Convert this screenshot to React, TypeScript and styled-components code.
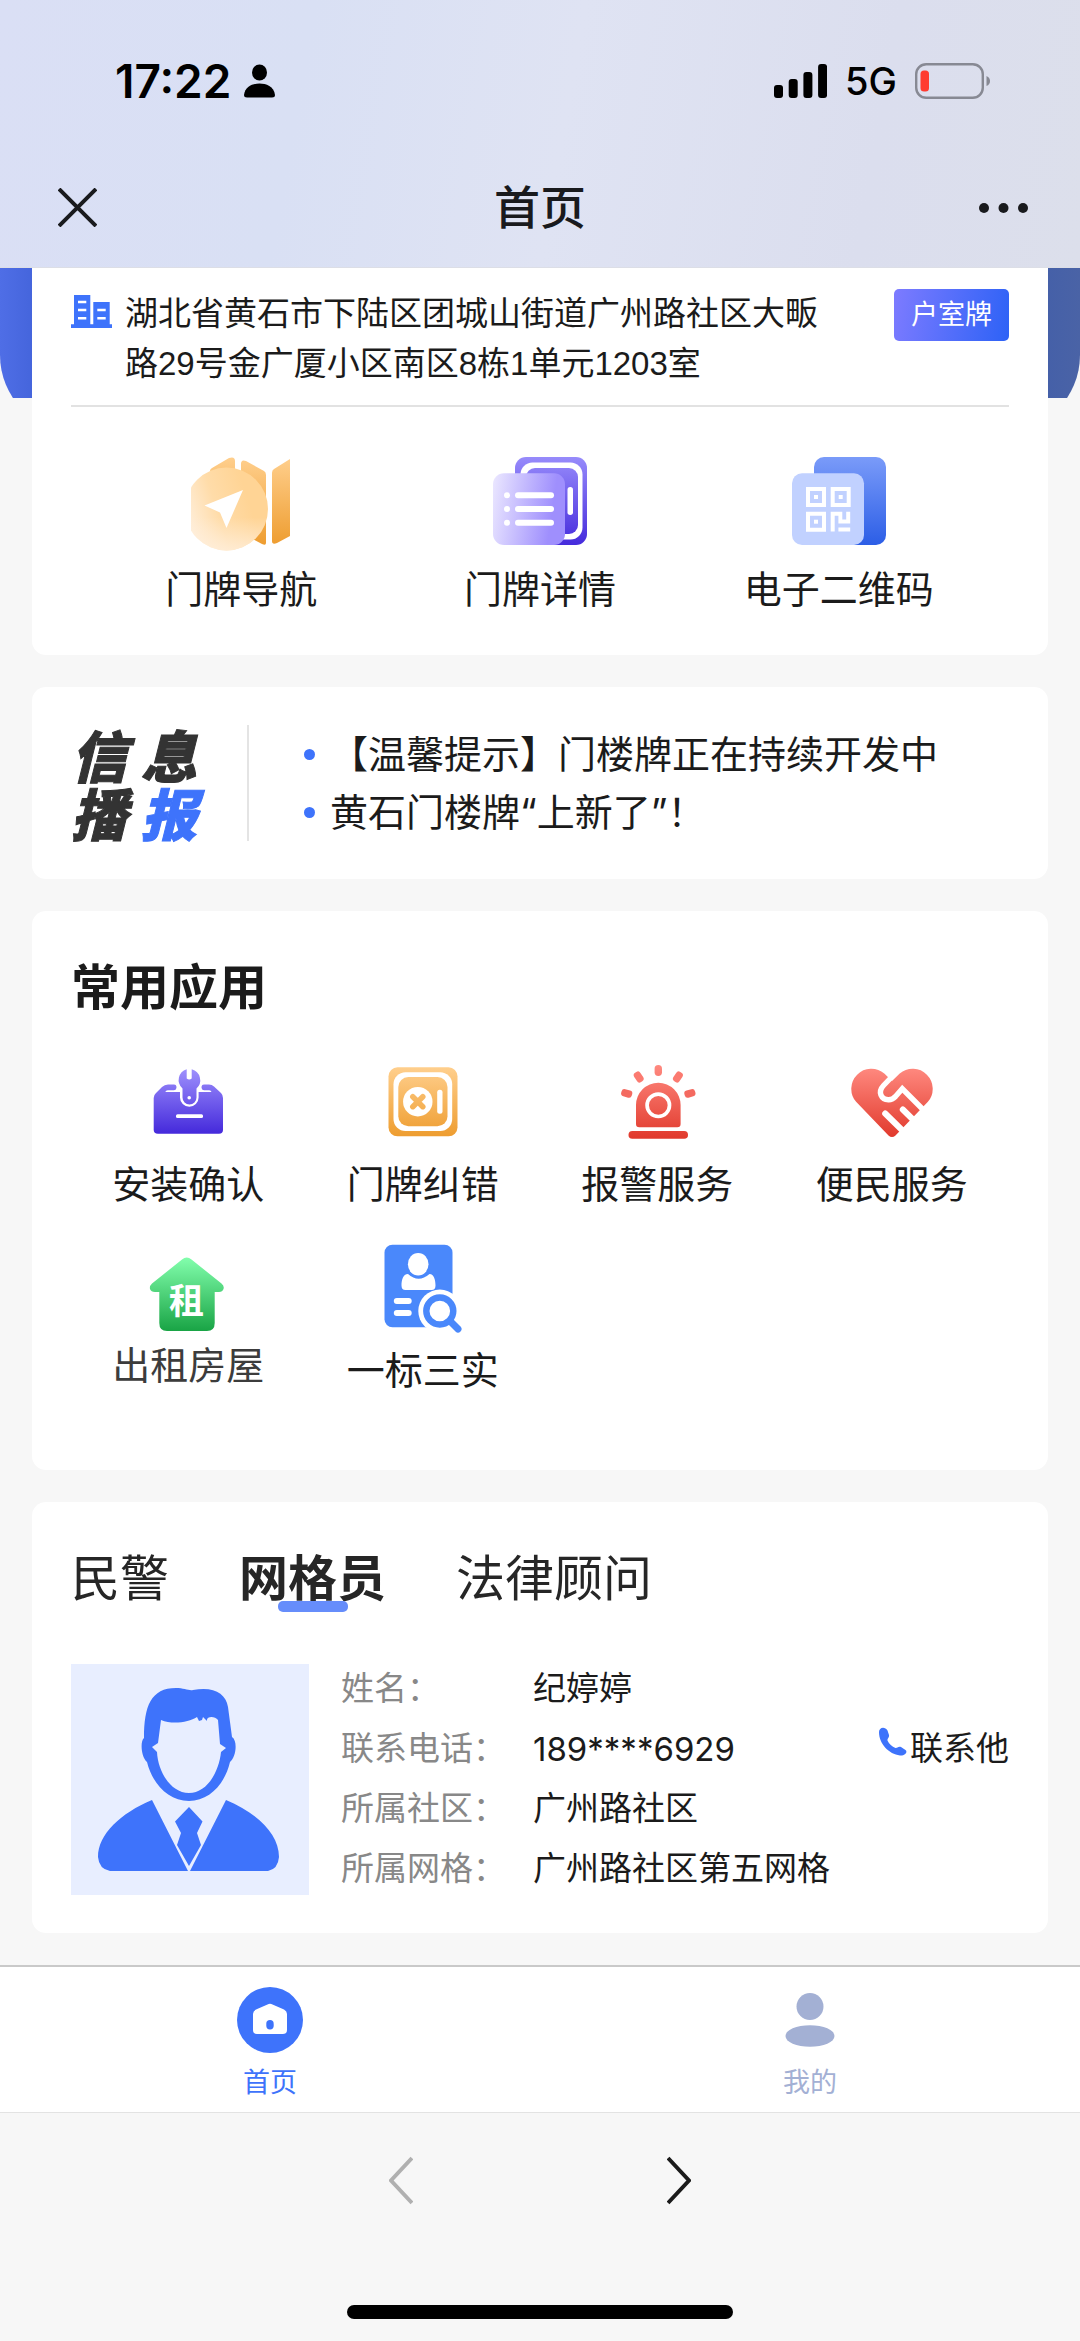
import React, { useState } from "react";
import styled, { createGlobalStyle } from "styled-components";

const sans = `"Liberation Sans", "Noto Sans CJK SC", sans-serif`;
const system = `Inter, "Noto Sans CJK SC", sans-serif`;

const GlobalStyle = createGlobalStyle`
  *, *::before, *::after { box-sizing: border-box; }
  body { margin: 0; background: #f7f7f7; color: #1b1b1b; font-family: ${sans}; }
  h1, h2, p, ul, dl, dd { margin: 0; padding: 0; }
  button { margin: 0; padding: 0; border: 0; background: none; color: inherit; font: inherit; cursor: pointer; }
  a { color: inherit; text-decoration: none; }
  svg { display: block; flex: none; }
`;

const Page = styled.div`
  display: flex;
  flex-direction: column;
  min-height: 100vh;
`;

const Header = styled.header`
  padding-top: 54px;
  border-bottom: 1px solid #dcdee6;
  background: linear-gradient(100deg, #dadff5 0%, #d9e0f4 28%, #dfe3f3 52%, #dbdeee 80%, #dcdfeb 100%);
`;

const StatusBar = styled.div`
  display: flex;
  align-items: center;
  justify-content: space-between;
  height: 54px;
  padding: 0 90px 0 115px;
  color: #000;
  font-family: ${system};
`;

const StatusGroup = styled.div<{ $gap: number }>`
  display: flex;
  align-items: center;
  gap: ${(p) => p.$gap}px;
`;

const Clock = styled.time`
  font-size: 46px;
  font-weight: 600;
  line-height: 54px;
`;

const Network = styled.span`
  font-size: 38px;
  font-weight: 500;
  line-height: 54px;
`;

const TitleBar = styled.div`
  display: grid;
  grid-template-columns: 1fr auto 1fr;
  align-items: center;
  height: 119px;
  margin-top: 40px;
  padding: 0 52px;
`;

const BarButton = styled.button<{ $end?: boolean }>`
  justify-self: ${(p) => (p.$end ? "end" : "start")};
  padding-left: 6px;
`;

const PageTitle = styled.h1`
  color: #191a1d;
  font-size: 46px;
  font-weight: 500;
  line-height: 60px;
`;

const Content = styled.main`
  position: relative;
  flex: 1;
  display: flex;
  flex-direction: column;
  gap: 32px;
  padding: 0 32px 32px;
`;

const Backdrop = styled.div`
  position: absolute;
  inset: 0 0 auto;
  height: 130px;
  overflow: hidden;

  &::before {
    content: "";
    display: block;
    height: 165px;
    border-radius: 0 0 78px 78px;
    background: linear-gradient(90deg, #4f6ee6 0%, #4565dc 3%, #4560a8 97%, #4a63a6 100%);
  }
`;

const Card = styled.section<{ $pad: string; $flush?: boolean }>`
  position: relative;
  padding: ${(p) => p.$pad};
  border-radius: ${(p) => (p.$flush ? "0 0 14px 14px" : "14px")};
  background: #fff;
`;

const AddressRow = styled.div`
  display: flex;
  align-items: flex-start;
  padding-bottom: 16px;
  border-bottom: 2px solid #e2e2e2;

  > svg { margin: 6px 13px 0 0; }
`;

const Address = styled.p`
  flex: 1;
  max-width: 710px;
  font-size: 33px;
  line-height: 50px;
`;

const DoorTag = styled.button`
  width: 115px;
  height: 52px;
  margin-left: auto;
  border-radius: 5px;
  background: linear-gradient(100deg, #7d7bff 0%, #2d62f6 100%);
  color: #fff;
  font-size: 27px;
  line-height: 52px;
`;

const Shortcuts = styled.div`
  display: grid;
  grid-template-columns: repeat(3, 1fr);
  padding: 50px 21px 0;
`;

const Grid = styled.div`
  display: grid;
  grid-template-columns: repeat(4, 1fr);
  row-gap: 34px;
  margin-top: 44px;
`;

const Tile = styled.button<{ $icon: number; $gap: number; $top?: number; $soft?: boolean }>`
  display: flex;
  flex-direction: column;
  align-items: center;
  justify-content: flex-start;
  gap: ${(p) => p.$gap}px;
  padding-top: ${(p) => p.$top ?? 0}px;
  color: ${(p) => (p.$soft ? "#3c3c3c" : "#1b1b1b")};
  font-size: 38px;
  line-height: 50px;

  > svg { height: ${(p) => p.$icon}px; }
`;

const NewsCard = styled(Card)`
  display: flex;
  align-items: center;
`;

const NewsLogo = styled.h2`
  display: grid;
  grid-template-columns: 70px 67px;
  grid-auto-rows: 58px;
  color: #333;
  font-family: "Noto Sans CJK SC", sans-serif;
  font-size: 56px;
  font-style: italic;
  font-weight: 900;
  line-height: 58px;
`;

const LogoGlyph = styled.span<{ $accent?: boolean }>`
  color: ${(p) => (p.$accent ? "#3e73fb" : "inherit")};
  -webkit-text-stroke: 1px currentColor;
`;

const NewsList = styled.ul`
  flex: 1;
  margin-left: 39px;
  padding-left: 55px;
  border-left: 2px solid #e4e4e4;
  font-family: ${system};
  list-style: none;
`;

const NewsItem = styled.li`
  display: flex;
  align-items: center;
  gap: 15px;
  font-size: 38px;
  line-height: 58px;

  &::before {
    content: "";
    width: 11px;
    height: 11px;
    border-radius: 50%;
    background: #3e73fb;
  }
`;

const SectionTitle = styled.h2`
  font-size: 49px;
  font-weight: 700;
  line-height: 60px;
`;

const Tabs = styled.div`
  display: flex;
  gap: 70px;
`;

const Tab = styled.button<{ $active: boolean }>`
  position: relative;
  color: #262626;
  font-size: 49px;
  font-weight: ${(p) => (p.$active ? 700 : 400)};
  line-height: 60px;

  &::after {
    content: "";
    display: ${(p) => (p.$active ? "block" : "none")};
    position: absolute;
    left: 50%;
    bottom: -3px;
    width: 70px;
    height: 11px;
    margin-left: -35px;
    border-radius: 5px;
    background: #668dfb;
  }
`;

const Person = styled.div`
  display: flex;
  align-items: center;
  gap: 32px;
  margin-top: 50px;
`;

const Details = styled.dl`
  flex: 1;
  display: grid;
  grid-template-columns: 192px 1fr;
  font-size: 33px;
  line-height: 60px;

  dt { color: #888; }
  dd { display: flex; justify-content: space-between; }
`;

const PhoneNumber = styled.span`
  font-family: ${system};
`;

const CallLink = styled.a`
  display: flex;
  gap: 3px;

  > svg { margin-top: 8px; }
`;

const TabBar = styled.nav`
  display: grid;
  grid-template-columns: 1fr 1fr;
  padding: 20px 0 11px;
  border-top: 2px solid #c9c9c9;
  background: #fff;
`;

const TabBarLink = styled.a<{ $active?: boolean }>`
  display: flex;
  flex-direction: column;
  align-items: center;
  gap: 12px;
  color: ${(p) => (p.$active ? "#3e73fb" : "#a3b0d4")};
  font-size: 27px;
  line-height: 36px;
`;

const BrowserBar = styled.footer`
  display: flex;
  flex-direction: column;
  align-items: center;
  gap: 100px;
  padding: 43px 0 22px;
  border-top: 1px solid #e3e3e3;
  background: #f7f7f7;
`;

const History = styled.div`
  display: flex;
  gap: 254px;
`;

const HomeIndicator = styled.div`
  width: 386px;
  height: 14px;
  border-radius: 7px;
  background: #000;
`;

function Fade({ id, from, to, y1 = 0, y2, x2 = 0 }: { id: string; from: string; to: string; y1?: number; y2: number; x2?: number }) {
  return (
    <defs>
      <linearGradient id={id} gradientUnits="userSpaceOnUse" x1={0} y1={y1} x2={x2} y2={y2}>
        <stop offset="0" stopColor={from} />
        <stop offset="1" stopColor={to} />
      </linearGradient>
    </defs>
  );
}

const CompassIcon = () => (
  <svg width="100" height="94" viewBox="0 0 100 94">
    <Fade id="map" from="#ffcf8d" to="#ee9d30" y2={88} />
    <defs>
      <linearGradient id="disc" x1="0" y1="0.6" x2="0.75" y2="0.35">
        <stop offset="0" stopColor="#ffefdc" />
        <stop offset="0.5" stopColor="#ffdca9" />
        <stop offset="1" stopColor="#ffd495" />
      </linearGradient>
      <linearGradient id="discBase" x1="0" y1="0" x2="0" y2="1">
        <stop offset="0.6" stopColor="#ffefdc" stopOpacity="0" />
        <stop offset="1" stopColor="#ffefdc" stopOpacity="0.8" />
      </linearGradient>
    </defs>
    <path fill="url(#map)" d="M19 24V14Q19 12 21 11L38 1Q44-1 44 4V24ZM50 30V7Q50 2 55 4L73 14Q75 15 75 18V86Q75 89 71 87L50 76ZM81 16Q81 13 83 12L99 2V79L86 86Q81 88 81 84Z" />
    <circle cx="35.5" cy="52" r="41.5" fill="url(#disc)" />
    <circle cx="35.5" cy="52" r="41.5" fill="url(#discBase)" />
    <path fill="#fff" d="M13.5 48.5 52 33 35.5 71 29 55.5Z" />
  </svg>
);

const DetailIcon = () => (
  <svg width="94" height="94" viewBox="0 0 94 94">
    <Fade id="door" from="#978bfb" to="#452bdc" y2={88} />
    <Fade id="sheet" from="#eeebff" to="#9f8ffd" x2={66} y2={10} />
    <rect x="22" width="72" height="88" rx="11" fill="url(#door)" />
    <rect x="27.5" y="5.5" width="62" height="77" rx="12" fill="#fff" />
    <rect x="33" y="11" width="52" height="66" rx="9" fill="url(#door)" />
    <rect x="74.5" y="30" width="5.5" height="28" rx="2.7" fill="#fff" />
    <rect y="16.3" width="72" height="71.7" rx="11" fill="url(#sheet)" />
    {[38.3, 52, 65.7].map((y) => (
      <g key={y} fill="#fff">
        <circle cx="14" cy={y} r="3" />
        <rect x="22" y={y - 3} width="39" height="6" rx="3" />
      </g>
    ))}
  </svg>
);

const QrIcon = () => (
  <svg width="94" height="94" viewBox="0 0 94 94">
    <Fade id="blueCard" from="#7a9bf9" to="#2c5ee6" y2={88} />
    <rect x="22" width="72" height="88" rx="10" fill="url(#blueCard)" />
    <rect y="16.3" width="72" height="71.7" rx="10" fill="#c1d1ff" />
    {[[14, 30], [38.7, 30], [14, 54.7]].map(([x, y]) => (
      <g key={`${x}-${y}`} fill="#fff">
        <path fillRule="evenodd" d={`M${x} ${y}h20v20h-20ZM${x + 4} ${y + 4}v12h12v-12Z`} />
        <rect x={x + 8} y={y + 8} width="4" height="4" />
      </g>
    ))}
    <path fill="#fff" d="M38.7 54.7H50.3V62.5H54.2V54.7H58.2V66.5H46.4V58.7H42.7V74.6H38.7ZM46.4 70.5H58.2V74.6H46.4Z" />
  </svg>
);

const BuildingIcon = () => (
  <svg width="41" height="33" viewBox="0 0 41 33">
    <path fill="#3e73fb" d="M3 0H19.3V29.3H22.3V7H38.7V29.3H41V33H0V29.3H3Z" />
    <path stroke="#fff" strokeWidth="2.6" d="M7 7H15.3M7 15H15.3M7 23.3H15.3M26.3 15H34.7M26.3 23.3H34.7" />
  </svg>
);

const ToolboxIcon = () => (
  <svg width="80" height="80" viewBox="0 0 80 80">
    <Fade id="tool" from="#9c8efc" to="#4429db" y1={8} y2={72} />
    <path fill="url(#tool)" d="M5.7 36Q5.7 33 8 31L14 25Q16.5 22.5 20 22.5H61Q64 22.5 66 24.5L73 31Q75 33 75 36V68Q75 71.7 71 71.7H10Q5.7 71.7 5.7 68Z" />
    <path fill="#fff" d="M17.5 30V29.5Q18.5 28.3 20 28.3H26Q28.5 28 28.5 25.5Q28.5 22.5 26 22H56Q53.5 22.5 53.5 25.5Q53.5 28 56 28.3H61Q62.5 28.3 63.3 29.5V30H50.6V35.5A9.3 9.3 0 0 1 32 35.5V30Z" />
    <path fill="url(#tool)" d="M38.7 7.2V16.5Q41.2 18.5 43.7 16.5V7.2A11.3 11.3 0 0 1 48.5 26.5V35.5A7 7 0 0 1 34.5 35.5V26.5A11.3 11.3 0 0 1 38.7 7.2Z" />
    <circle cx="41.2" cy="35.7" r="1.8" fill="#fff" />
    <rect x="28" y="52.3" width="27" height="3.7" rx="1.5" fill="#fff" />
  </svg>
);

const DoorErrorIcon = () => (
  <svg width="80" height="80" viewBox="0 0 80 80">
    <Fade id="amber" from="#ffcf8d" to="#ee9d30" y1={5} y2={74} />
    <rect x="5.5" y="5.3" width="69" height="69" rx="9" fill="url(#amber)" />
    <rect x="10.5" y="10.3" width="58.7" height="58.7" rx="12" fill="#fff" />
    <rect x="15.3" y="15" width="49.2" height="49.3" rx="10" fill="url(#amber)" />
    <circle cx="34.8" cy="39.7" r="14.7" fill="#fff" />
    <path stroke="url(#amber)" strokeWidth="5.5" strokeLinecap="round" d="M29.8 34.7 39.8 44.7M39.8 34.7 29.8 44.7" />
    <rect x="54.2" y="27.7" width="5.3" height="24" rx="2.5" fill="#fff" />
  </svg>
);

const SirenIcon = () => (
  <svg width="80" height="80" viewBox="0 0 80 80">
    <Fade id="alarm" from="#ff8a80" to="#e13a2d" y1={3} y2={76} />
    <g fill="url(#alarm)">
      <path d="M19 43A22.3 22.3 0 0 1 63.6 43V62Q63.6 65.3 60.3 65.3H22.3Q19 65.3 19 62Z" />
      <rect x="11.5" y="69" width="59.5" height="7.7" rx="3.8" />
      <rect x="37.6" y="3" width="7.4" height="11" rx="3.7" />
    </g>
    <g fill="#fb7a70">
      <rect x="18" y="9.5" width="7.4" height="11" rx="3" transform="rotate(-33 21.7 15)" />
      <rect x="57.2" y="9.5" width="7.4" height="11" rx="3" transform="rotate(33 60.9 15)" />
    </g>
    <g fill="#f46a60">
      <rect x="6" y="25.9" width="7.4" height="11" rx="3" transform="rotate(-74 9.7 31.4)" />
      <rect x="69.2" y="25.9" width="7.4" height="11" rx="3" transform="rotate(74 72.9 31.4)" />
    </g>
    <circle cx="41.3" cy="43.3" r="11.2" fill="none" stroke="#fff" strokeWidth="3.7" />
  </svg>
);

const HeartHandIcon = () => (
  <svg width="86" height="80" viewBox="0 0 86 80">
    <Fade id="heart" from="#ff8a80" to="#e1392c" y1={5} y2={76} />
    <path fill="url(#heart)" d="M43 19 35.3 11.6A20 20 0 0 0 7.1 39.8L39.5 73.5Q43 76.5 46.5 73.5L78.9 39.8A20 20 0 0 0 50.7 11.6Z" />
    <g fill="none" stroke="#fff">
      <path strokeWidth="5.4" d="M46.5 11 34.5 23.5C28.5 30 32 37.5 39.5 37.8C43 38 45 36 46.5 34.5L53.3 26.8 77 50.5" />
      <path strokeWidth="6" strokeLinecap="round" d="M36.2 51.5 55 70M53.8 47.5 70 63.5" />
    </g>
  </svg>
);

const RentIcon = () => (
  <svg width="80" height="80" viewBox="0 0 80 80">
    <Fade id="rent" from="#83ffad" to="#19a445" y1={3} y2={77} />
    <path fill="url(#rent)" d="M34 5.5Q38.7 1.5 43.5 5.5L73.5 29.5Q76.5 32 75.5 35Q74.5 38 71 38H66.7V69Q66.7 77 59 77H19Q11.3 77 11.3 69V38H7Q3 38 2 35Q1.3 32 4 29.5Z" />
    <text x="38.5" y="60" textAnchor="middle" fill="#fff" fontFamily="Noto Sans CJK SC" fontSize="35" fontWeight="700">租</text>
  </svg>
);

const SearchCardIcon = () => (
  <svg width="80" height="90" viewBox="0 0 80 90">
    <rect x="1.5" y="0.7" width="68" height="82.6" rx="8" fill="#4a88fb" />
    <ellipse cx="35.2" cy="20.3" rx="10.3" ry="11.3" fill="#fff" />
    <path fill="#fff" d="M25 30Q35.5 39.5 46.5 30C51 30 52.5 36 52.5 41.5Q52.5 46 48.5 46H22.5Q18.5 46 18.5 41.5C18.5 36 20 30 25 30Z" />
    <rect x="10.8" y="54" width="17.9" height="6" rx="3" fill="#fff" />
    <rect x="10.8" y="66" width="17.9" height="6" rx="3" fill="#fff" />
    <circle cx="56.8" cy="67" r="21.5" fill="#fff" />
    <circle cx="56.8" cy="67" r="13.5" fill="#fff" stroke="#4a88fb" strokeWidth="6.4" />
    <path stroke="#4a88fb" strokeWidth="7" strokeLinecap="round" d="M67 77 75 85" />
  </svg>
);

const Avatar = () => (
  <svg width="238" height="231" viewBox="0 0 238 231" role="img" aria-label="网格员头像">
    <path fill="#e8eeff" d="M0 0H238V231H0Z" />
    <g fill="#3e73fb">
      <path fillRule="evenodd" d="M73 74C73 42 80 24 105 24C113 24 118 27 122 26C142 22 155 29 157 43L161 73C167 77 165 93 159 98C154 120 138 137 118 137C97 137 81 119 76 98C70 93 69 77 73 74ZM90 56C102 61 118 58 126 53L128 57 131 56 132 53 136 57C135 52 144 52 147 56L149 80 155 84 150 88C148 108 136 129 118 129C100 129 87 108 86 88L81 83 87 79Z" />
      <path d="M81 136 117 207H39Q28 205 27 193C27 170 50 149 81 136ZM155 136 119 207H197Q207 205 208 193C208 170 186 149 155 136ZM118 143 131.5 157.5 126 169 130 181 118 202 106 181 110 169 104 157.5Z" />
    </g>
  </svg>
);

const PhoneIcon = () => (
  <svg width="28" height="29" viewBox="0 0 28 29">
    <path fill="#3e73fb" d="M0 5C0 0 6-1 8.5 3.5L10 8C10.5 11 8 11.5 8.5 13.5C10 17 13 19.5 16.5 21C18 21.5 19 19 22 20L26.5 23C29 25 26 29 21 28.5C10 27 0 17 0 5Z" />
  </svg>
);

const people = ["民警", "网格员", "法律顾问"];

export default function App() {
  const [tab, setTab] = useState(1);

  return (
    <Page lang="zh-CN">
      <GlobalStyle />
      <Header>
        <StatusBar>
          <StatusGroup $gap={13}>
            <Clock>17:22</Clock>
            <svg width="31" height="34" viewBox="0 0 31 34">
              <ellipse cx="15.5" cy="8.5" rx="7.5" ry="8" />
              <path d="M0 31C1 22 9 19.5 15.5 19.5S30 22 31 31Q31 33.5 28 33.5H3Q0 33.5 0 31Z" />
            </svg>
          </StatusGroup>
          <StatusGroup $gap={18}>
            <svg width="53" height="34" viewBox="0 0 53 34">
              {[13, 19, 26, 34].map((h, i) => (
                <rect key={h} x={i * 14.7} y={34 - h} width="9" height={h} rx="3" />
              ))}
            </svg>
            <Network>5G</Network>
            <svg width="75" height="36" viewBox="0 0 75 36">
              <rect x="1.2" y="1.2" width="66.6" height="33.6" rx="10" fill="none" stroke="#878993" strokeWidth="2.4" />
              <rect x="5.5" y="7.5" width="8.5" height="21" rx="3.5" fill="#ff3b30" />
              <path fill="#878993" d="M71.5 13Q75 14.5 75 18T71.5 23Z" />
            </svg>
          </StatusGroup>
        </StatusBar>
        <TitleBar>
          <BarButton aria-label="关闭">
            <svg width="39" height="39" viewBox="0 0 39 39">
              <path stroke="#191a1d" strokeWidth="4" d="M1 1 38 38M38 1 1 38" />
            </svg>
          </BarButton>
          <PageTitle>首页</PageTitle>
          <BarButton $end aria-label="更多">
            <svg width="49" height="10" viewBox="0 0 49 10" fill="#191a1d">
              <circle cx="5" cy="5" r="5" />
              <circle cx="24.5" cy="5" r="5" />
              <circle cx="44" cy="5" r="5" />
            </svg>
          </BarButton>
        </TitleBar>
      </Header>

      <Content>
        <Backdrop />
        <Card $flush $pad="21px 39px 40px">
          <AddressRow>
            <BuildingIcon />
            <Address>湖北省黄石市下陆区团城山街道广州路社区大畈路29号金广厦小区南区8栋1单元1203室</Address>
            <DoorTag>户室牌</DoorTag>
          </AddressRow>
          <Shortcuts>
            <Tile $icon={94} $gap={14}><CompassIcon />门牌导航</Tile>
            <Tile $icon={94} $gap={14}><DetailIcon />门牌详情</Tile>
            <Tile $icon={94} $gap={14}><QrIcon />电子二维码</Tile>
          </Shortcuts>
        </Card>

        <NewsCard $pad="38px 39px">
          <NewsLogo>
            <LogoGlyph>信</LogoGlyph>
            <LogoGlyph>息</LogoGlyph>
            <LogoGlyph>播</LogoGlyph>
            <LogoGlyph $accent>报</LogoGlyph>
          </NewsLogo>
          <NewsList>
            <NewsItem>【温馨提示】门楼牌正在持续开发中</NewsItem>
            <NewsItem>黄石门楼牌“上新了”！</NewsItem>
          </NewsList>
        </NewsCard>

        <Card $pad="47px 39px 74px">
          <SectionTitle>常用应用</SectionTitle>
          <Grid>
            <Tile $icon={80} $gap={18}><ToolboxIcon />安装确认</Tile>
            <Tile $icon={80} $gap={18}><DoorErrorIcon />门牌纠错</Tile>
            <Tile $icon={80} $gap={18}><SirenIcon />报警服务</Tile>
            <Tile $icon={80} $gap={18}><HeartHandIcon />便民服务</Tile>
            <Tile $icon={80} $gap={7} $top={10} $soft><RentIcon />出租房屋</Tile>
            <Tile $icon={90} $gap={12}><SearchCardIcon />一标三实</Tile>
          </Grid>
        </Card>

        <Card $pad="47px 39px 34px">
          <Tabs role="tablist">
            {people.map((name, i) => (
              <Tab key={name} role="tab" aria-selected={tab === i} $active={tab === i} onClick={() => setTab(i)}>
                {name}
              </Tab>
            ))}
          </Tabs>
          <Person>
            <Avatar />
            <Details>
              <dt>姓名：</dt>
              <dd>纪婷婷</dd>
              <dt>联系电话：</dt>
              <dd>
                <PhoneNumber>189****6929</PhoneNumber>
                <CallLink href="#call"><PhoneIcon />联系他</CallLink>
              </dd>
              <dt>所属社区：</dt>
              <dd>广州路社区</dd>
              <dt>所属网格：</dt>
              <dd>广州路社区第五网格</dd>
            </Details>
          </Person>
        </Card>
      </Content>

      <TabBar>
        <TabBarLink href="#home" $active>
          <svg width="66" height="66" viewBox="0 0 66 66">
            <circle cx="33" cy="33" r="33" fill="#3e73fb" />
            <path fill="#fff" d="M30.5 17.5Q33 15.8 35.5 17.5L47 22.5Q50 24.2 50 27V43Q50 47 46 47H20Q16 47 16 43V27Q16 24.2 19 22.5Z" />
            <rect x="29.3" y="33" width="7.4" height="9.5" rx="3.7" fill="#3e73fb" />
          </svg>
          首页
        </TabBarLink>
        <TabBarLink href="#mine">
          <svg width="66" height="66" viewBox="0 0 66 66" fill="#a3b0d4">
            <circle cx="33" cy="19.5" r="13.5" />
            <ellipse cx="33" cy="49" rx="24.5" ry="10.8" />
          </svg>
          我的
        </TabBarLink>
      </TabBar>

      <BrowserBar>
        <History>
          <button aria-label="后退">
            <svg width="24" height="49" viewBox="0 0 24 49">
              <path fill="none" stroke="#b0b0b0" strokeWidth="4" d="M23 2 2 24.5 23 47" />
            </svg>
          </button>
          <button aria-label="前进">
            <svg width="24" height="49" viewBox="0 0 24 49">
              <path fill="none" stroke="#1b1b1b" strokeWidth="4" d="M1 2 22 24.5 1 47" />
            </svg>
          </button>
        </History>
        <HomeIndicator />
      </BrowserBar>
    </Page>
  );
}
